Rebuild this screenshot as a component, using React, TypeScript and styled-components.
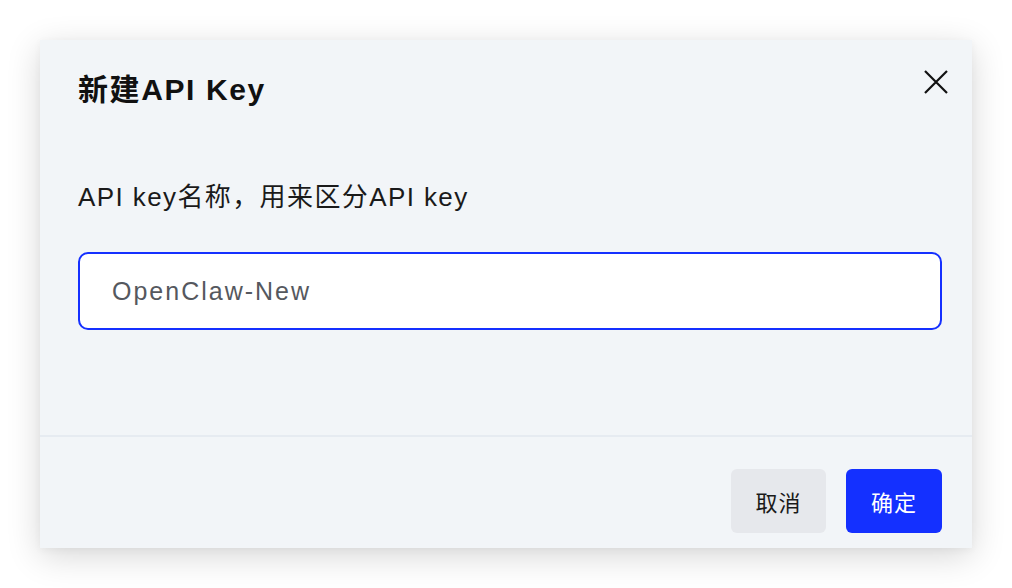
import React from "react";
import styled, { createGlobalStyle } from "styled-components";

const Global = createGlobalStyle`
  html, body { margin: 0; padding: 0; background: #ffffff; }
  body { font-family: "Liberation Sans", "Noto Sans CJK SC", sans-serif; }
  * { box-sizing: border-box; }
`;

const Page = styled.div`
  width: 1012px;
  height: 588px;
  padding: 40px;
  background: #ffffff;
`;

const Dialog = styled.div`
  width: 932px;
  height: 508px;
  background: #f2f5f8;
  box-shadow: 0 8px 32px rgba(0, 0, 0, 0.16), 0 2px 8px rgba(0, 0, 0, 0.04);
  display: flex;
  flex-direction: column;
`;

const Header = styled.div`
  display: flex;
  justify-content: space-between;
  align-items: flex-start;
  padding: 30px 24px 0 38px;
`;

const Title = styled.h2`
  margin: 0;
  font-size: 30px;
  line-height: 40px;
  font-weight: 700;
  letter-spacing: 1.6px;
  color: #111111;
`;

const CloseButton = styled.button`
  width: 24px;
  height: 24px;
  padding: 0;
  border: none;
  background: transparent;
  cursor: pointer;
  display: flex;
  align-items: center;
  justify-content: center;
`;

const Body = styled.div`
  display: flex;
  flex-direction: column;
  padding: 69px 30px 0 38px;
  flex: 1;
`;

const Label = styled.label`
  font-size: 26px;
  line-height: 36px;
  letter-spacing: 1.4px;
  color: #1a1a1a;
`;

const Input = styled.input`
  margin-top: 37px;
  width: 100%;
  height: 78px;
  border: 2px solid #1530ff;
  border-radius: 10px;
  background: #ffffff;
  padding: 0 32px;
  font-family: "Liberation Sans", "Noto Sans CJK SC", sans-serif;
  font-size: 25px;
  letter-spacing: 2px;
  color: #55585e;
  outline: none;
`;

const Footer = styled.div`
  border-top: 2px solid #e6ebf1;
  display: flex;
  justify-content: flex-end;
  gap: 20px;
  padding: 32px 30px 15px 38px;
`;

const Button = styled.button<{ $primary?: boolean }>`
  height: 64px;
  width: ${(p) => (p.$primary ? "96px" : "95px")};
  border: none;
  border-radius: 6px;
  font-family: "Liberation Sans", "Noto Sans CJK SC", sans-serif;
  font-size: 22px;
  letter-spacing: 1px;
  cursor: pointer;
  background: ${(p) => (p.$primary ? "#1430ff" : "#e6e8ec")};
  color: ${(p) => (p.$primary ? "#ffffff" : "#1a1a1a")};
`;

export default function App() {
  return (
    <>
      <Global />
      <Page>
        <Dialog>
          <Header>
            <Title>新建API Key</Title>
            <CloseButton aria-label="关闭">
              <svg width="24" height="24" viewBox="0 0 24 24" fill="none">
                <path d="M1 1L23 23M23 1L1 23" stroke="#111" strokeWidth="2.2" />
              </svg>
            </CloseButton>
          </Header>
          <Body>
            <Label>API key名称，用来区分API key</Label>
            <Input defaultValue="OpenClaw-New" />
          </Body>
          <Footer>
            <Button>取消</Button>
            <Button $primary>确定</Button>
          </Footer>
        </Dialog>
      </Page>
    </>
  );
}
